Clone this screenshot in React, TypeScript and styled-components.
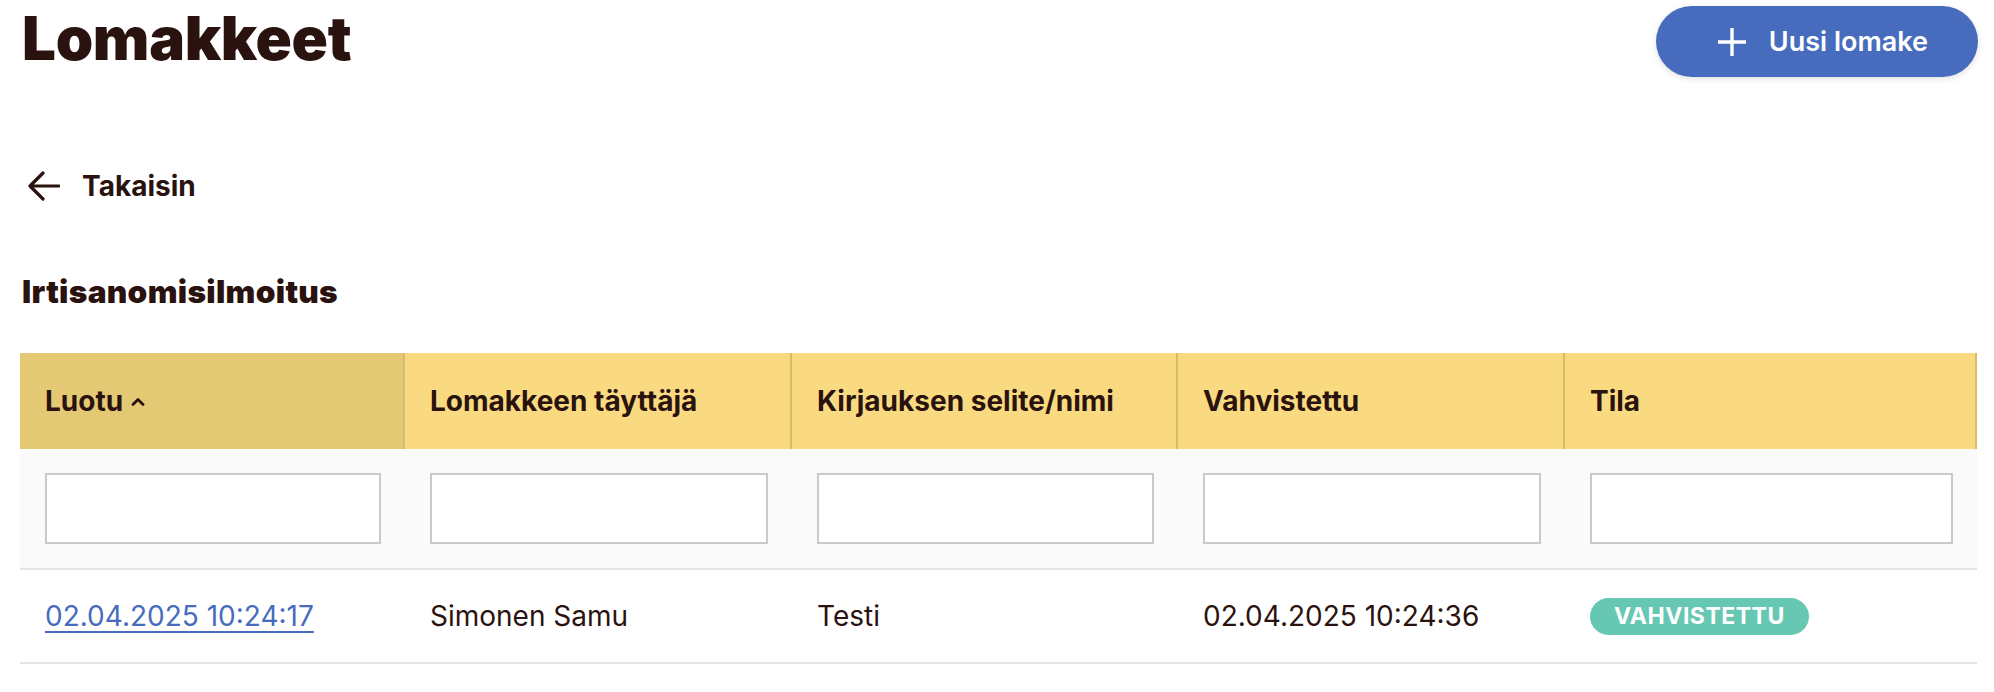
import React from "react";
import styled, { createGlobalStyle } from "styled-components";

const GlobalStyle = createGlobalStyle`
  html, body { margin: 0; padding: 0; background: #ffffff; }
  body { font-family: Inter, "Noto Sans", Arial, sans-serif; color: #2a130f; }
  * { box-sizing: border-box; }
`;

const Page = styled.div`
  padding: 6px 16px 0 20px;
  width: 1994px;
`;

const TopBar = styled.div`
  display: flex;
  justify-content: space-between;
  align-items: center;
  height: 71px;
`;

const Title = styled.h1`
  margin: 0 0 0 2px;
  font-family: Inter, "Noto Sans", sans-serif;
  font-weight: 900;
  font-size: 60px;
  line-height: 71px;
  letter-spacing: -0.3px;
  color: #2a130f;
  position: relative;
  top: -3px;
`;

const PrimaryButton = styled.button`
  display: flex;
  align-items: center;
  gap: 23px;
  height: 71px;
  padding: 0 50px 0 62px;
  border: none;
  border-radius: 36px;
  background: #476cbd;
  color: #ffffff;
  font-family: Inter, "Noto Sans", sans-serif;
  font-weight: 600;
  font-size: 27px;
  box-shadow: 0 2px 6px rgba(0, 0, 0, 0.12);
  cursor: pointer;
`;

const BackLink = styled.a`
  display: flex;
  align-items: center;
  gap: 22px;
  margin: 93px 0 0 8px;
  height: 32px;
  font-weight: 700;
  font-size: 28px;
  color: #2a130f;
  text-decoration: none;
`;

const SectionTitle = styled.h2`
  margin: 72px 0 0 2px;
  font-family: Inter, "Noto Sans", sans-serif;
  font-weight: 900;
  font-size: 31.6px;
  line-height: 36px;
  letter-spacing: 0.3px;
  color: #2a130f;
`;

const Table = styled.div`
  margin-top: 43px;
  display: grid;
  grid-template-columns: 385px 387px 386px 387px 412px;
  width: 1957px;
`;

const HeadCell = styled.div<{ $sorted?: boolean }>`
  display: flex;
  align-items: center;
  gap: 8px;
  height: 96px;
  padding: 0 25px;
  background: ${(p) => (p.$sorted ? "#e4c974" : "#f9da80")};
  border-right: 2px solid #d6bc6c;
  font-weight: 700;
  font-size: 28px;
  color: #2a130f;
`;

const FilterCell = styled.div`
  background: #fafafa;
  padding: 24px 24px 24px 25px;
  border-bottom: 2px solid #e6e6e6;
`;

const FilterInput = styled.input`
  display: block;
  width: 100%;
  height: 71px;
  border: 2px solid #c9c9c9;
  background: #ffffff;
  border-radius: 0;
  outline: none;
`;

const Cell = styled.div`
  display: flex;
  align-items: center;
  height: 94px;
  padding: 0 25px 0 25px;
  border-bottom: 2px solid #e6e6e6;
  font-size: 28px;
  font-weight: 400;
  color: #2a130f;
`;

const DateLink = styled.a`
  color: #476cbd;
  text-decoration: underline;
  text-decoration-thickness: 2px;
  text-underline-offset: 5px;
`;

const Badge = styled.span`
  display: inline-flex;
  align-items: center;
  height: 37px;
  padding: 0 24px;
  border-radius: 19px;
  background: #66c8b2;
  color: #ffffff;
  font-weight: 700;
  font-size: 23px;
  letter-spacing: 0.5px;
  text-transform: uppercase;
`;

const PlusIcon = () => (
  <svg width="28" height="28" viewBox="0 0 28 28" fill="none">
    <path d="M14 1v26M1 14h26" stroke="#ffffff" strokeWidth="3.4" strokeLinecap="square" />
  </svg>
);

const ArrowLeft = () => (
  <svg width="32" height="30" viewBox="0 0 32 30" fill="none">
    <path d="M31 15H3M15 2L2 15l13 13" stroke="#2a130f" strokeWidth="3.2" strokeLinecap="round" strokeLinejoin="round" />
  </svg>
);

const CaretUp = () => (
  <svg width="14" height="9" viewBox="0 0 14 9" fill="none">
    <path d="M2 7.5L7 2.5l5 5" stroke="#2a130f" strokeWidth="2.8" strokeLinecap="round" strokeLinejoin="round" />
  </svg>
);

const columns = [
  "Luotu",
  "Lomakkeen täyttäjä",
  "Kirjauksen selite/nimi",
  "Vahvistettu",
  "Tila",
];

export default function App() {
  return (
    <>
      <GlobalStyle />
      <Page>
        <TopBar>
          <Title>Lomakkeet</Title>
          <PrimaryButton>
            <PlusIcon />
            Uusi lomake
          </PrimaryButton>
        </TopBar>
        <BackLink href="#">
          <ArrowLeft />
          Takaisin
        </BackLink>
        <SectionTitle>Irtisanomisilmoitus</SectionTitle>
        <Table>
          {columns.map((c, i) => (
            <HeadCell key={c} $sorted={i === 0}>
              {c}
              {i === 0 && <CaretUp />}
            </HeadCell>
          ))}
          {columns.map((c) => (
            <FilterCell key={"f" + c}>
              <FilterInput type="text" aria-label={c} />
            </FilterCell>
          ))}
          <Cell>
            <DateLink href="#">02.04.2025 10:24:17</DateLink>
          </Cell>
          <Cell>Simonen Samu</Cell>
          <Cell>Testi</Cell>
          <Cell>02.04.2025 10:24:36</Cell>
          <Cell>
            <Badge>Vahvistettu</Badge>
          </Cell>
        </Table>
      </Page>
    </>
  );
}
